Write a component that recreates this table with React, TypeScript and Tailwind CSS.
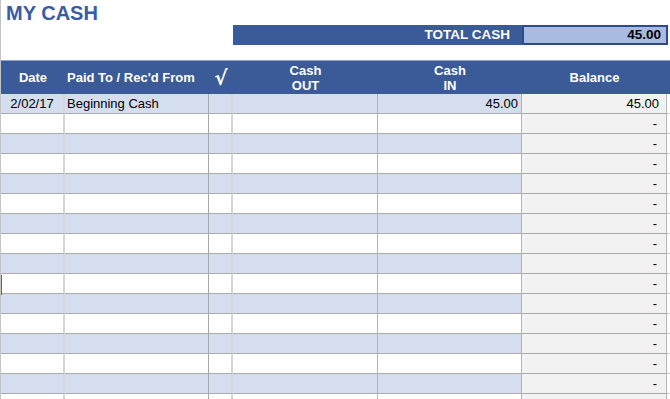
import React from "react";

const rows = Array.from({ length: 16 }, (_, i) => i);

export default function App() {
  return (
    <div
      className="w-[670px] h-[399px] overflow-hidden bg-white border-l border-[#c4c4c4] relative"
      style={{ fontFamily: '"Liberation Sans", Arial, sans-serif' }}
    >
      <div className="h-[25px] pl-[5px] pt-[1px] text-[20px] leading-[24px] font-bold text-[#3a5ca2]">
        MY CASH
      </div>
      <div className="flex h-[20px] pl-[232px]">
        <div className="w-[289px] bg-[#3a5a98] text-white font-bold text-[13.5px] leading-[20px] text-right pr-[12px]">
          TOTAL CASH
        </div>
        <div className="w-[146px] bg-[#a9bbe0] border-2 border-[#2f4c88] text-black font-bold text-[13.5px] leading-[16px] text-right pr-[5px]">
          45.00
        </div>
      </div>
      <div className="h-[15px]" />
      <div className="grid grid-cols-[64px_144px_24px_145px_144px_145px] h-[34px] bg-[#3a5a98] border-t border-[#8fa3cc] text-white font-bold text-[13px] leading-[15px]">
        <div className="flex items-center justify-center">Date</div>
        <div className="flex items-center pl-[2px]">Paid To / Rec'd From</div>
        <div
          className="flex items-center justify-center text-[20px] leading-[20px]"
          style={{ fontFamily: '"DejaVu Sans", "Liberation Sans", sans-serif' }}
        >
          √
        </div>
        <div className="flex flex-col items-center justify-center">
          <span>Cash</span>
          <span>OUT</span>
        </div>
        <div className="flex flex-col items-center justify-center">
          <span>Cash</span>
          <span>IN</span>
        </div>
        <div className="flex items-center justify-center">Balance</div>
      </div>
      {rows.map((i) => {
        const band = i % 2 === 0 ? "bg-[#d5deef]" : "bg-white";
        const first = i === 0;
        const last = i === rows.length - 1;
        return (
          <div
            key={i}
            className="grid grid-cols-[64px_144px_24px_145px_144px_145px_1fr] h-[20px] text-[13px] leading-[19px] text-black"
          >
            <div className={`${band} border-b border-r-2 border-b-[#ababab] border-r-[#d6d6d6] text-center`}>
              {first ? "2/02/17" : ""}
            </div>
            <div className={`${band} border-b border-r border-b-[#ababab] border-r-[#a8a8a8] pl-[2px]`}>
              {first ? "Beginning Cash" : ""}
            </div>
            <div className={`${band} border-b border-r-2 border-b-[#ababab] border-r-[#d6d6d6]`} />
            <div className={`${band} border-b border-r border-b-[#ababab] border-r-[#b4b4b4]`} />
            <div className={`${band} border-b border-r border-b-[#ababab] border-r-[#b4b4b4] text-right pr-[3px]`}>
              {first ? "45.00" : ""}
            </div>
            <div className="bg-[#f2f2f2] border-b border-r border-b-[#ababab] border-r-[#b4b4b4] text-right pr-[7px]">
              {first ? "45.00" : last ? "" : <span className="pr-[2px]">-</span>}
            </div>
            <div className="border-b border-b-[#c8c8c8]" />
          </div>
        );
      })}
      <div className="absolute left-[-1px] top-[275px] w-[2px] h-[20px] bg-[#2a8a52]" />
    </div>
  );
}
